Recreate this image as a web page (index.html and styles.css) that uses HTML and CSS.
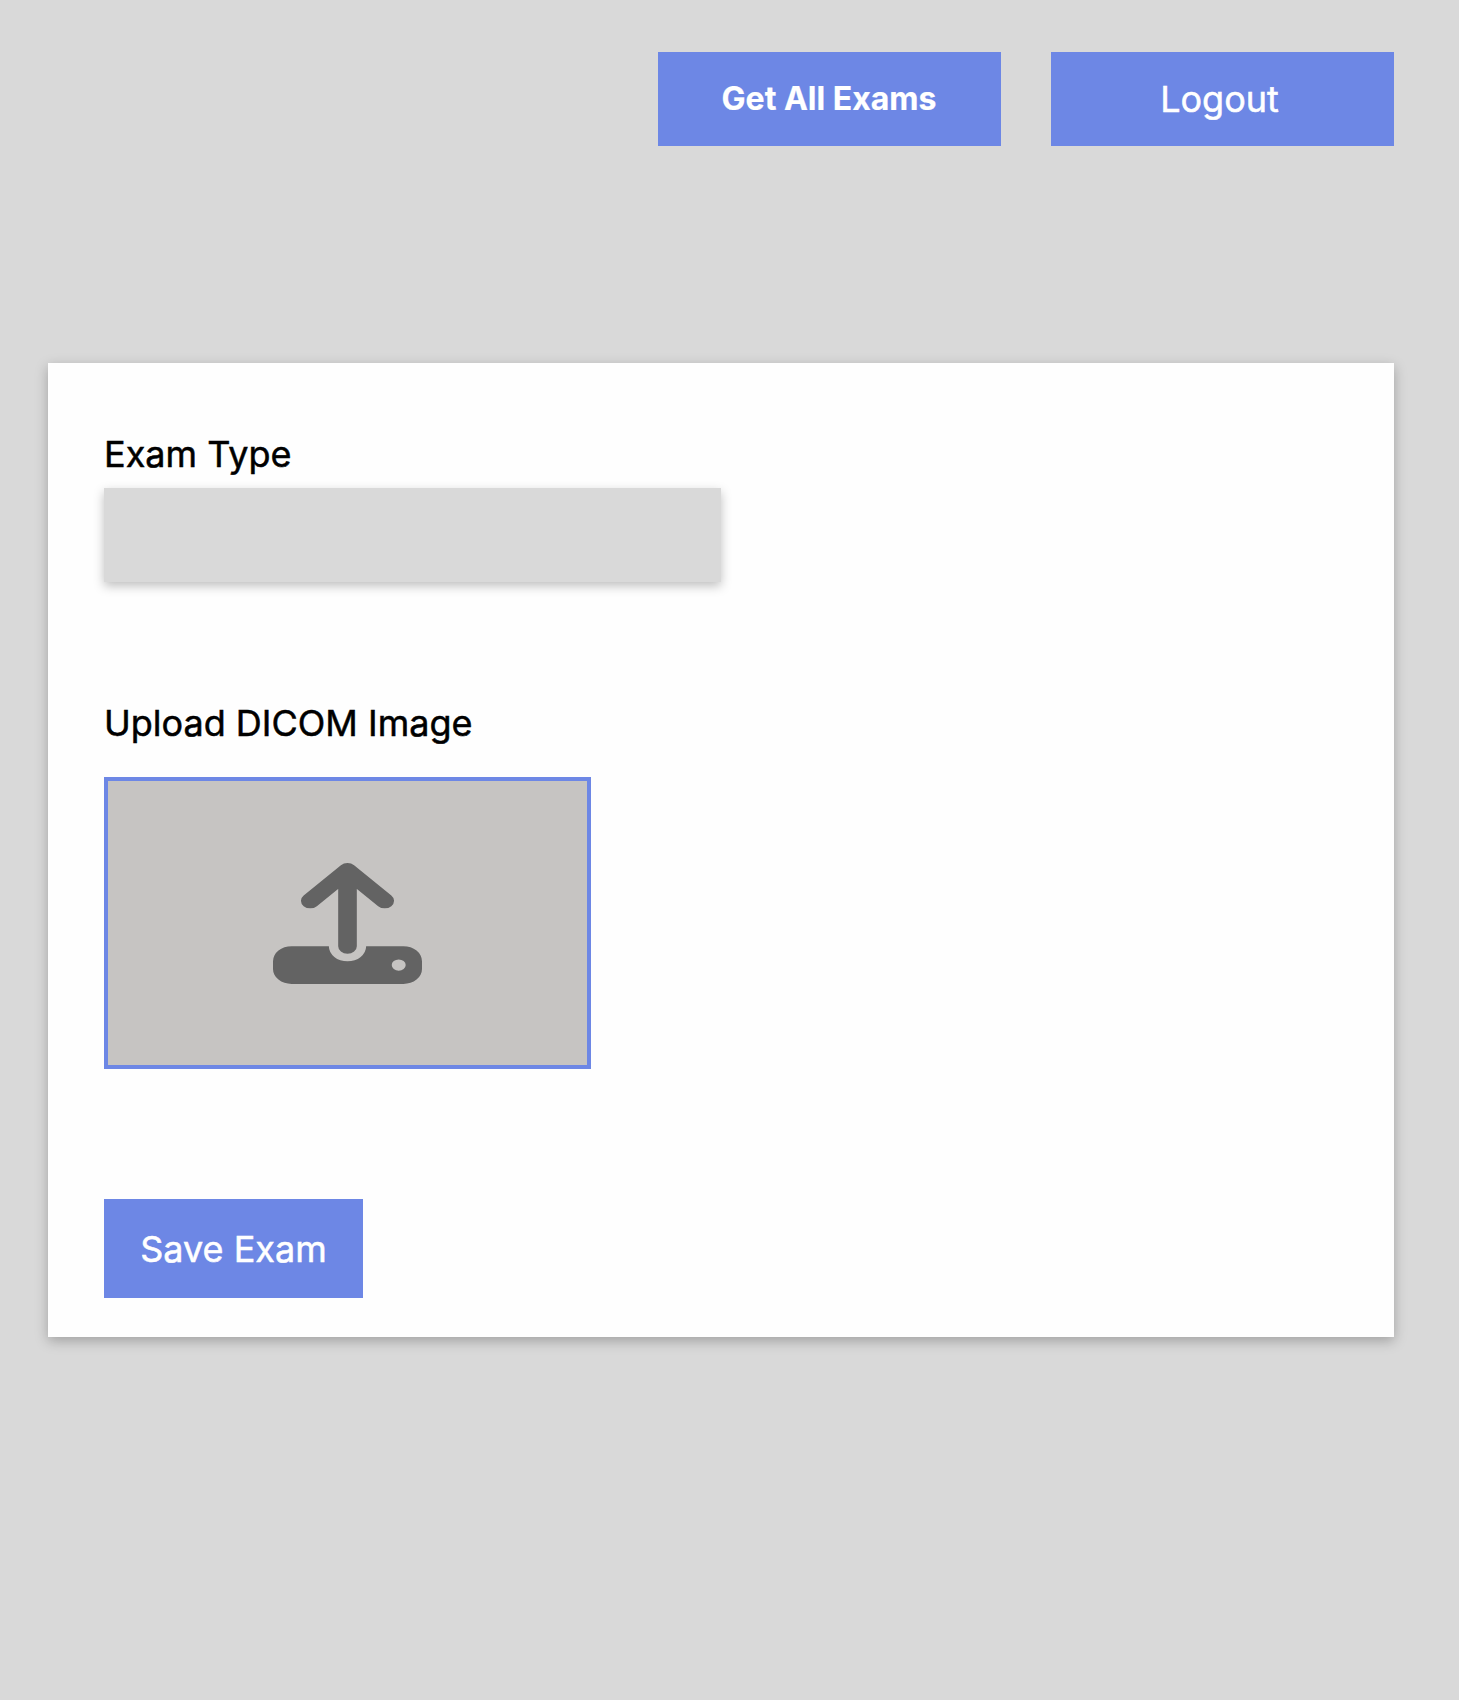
FILE: index.html
```html
<!DOCTYPE html>
<html lang="en">
<head>
<meta charset="utf-8">
<title>New Exam</title>
<link rel="stylesheet" href="styles.css">
</head>
<body>
<header class="toolbar">
  <button class="button button-strong" type="button"><span class="label-strong">Get All Exams</span></button>
  <button class="button" type="button"><span class="label-logout">Logout</span></button>
</header>
<main>
  <form class="card">
    <label class="label" for="exam-type">Exam Type</label>
    <input class="field" id="exam-type" type="text">
    <span class="label label-upload">Upload DICOM Image</span>
    <button class="dropzone" type="button" aria-label="Upload image">
      <svg class="upload-icon" viewBox="0 0 16 16" preserveAspectRatio="none" aria-hidden="true">
        <path d="M2 11H6A2 2 0 0 0 10 11H14A2 2 0 0 1 16 13V14A2 2 0 0 1 14 16H2A2 2 0 0 1 0 14V13A2 2 0 0 1 2 11ZM13.5 12.75A.75.75 0 0 0 13.5 14.25A.75.75 0 0 0 13.5 12.75Z" fill="#636363" fill-rule="evenodd"/>
        <path d="M4 5L8 1L12 5M8 1V11" fill="none" stroke="#636363" stroke-width="2" stroke-linecap="round" stroke-linejoin="round"/>
      </svg>
    </button>
    <button class="button button-save" type="button"><span class="label-save">Save Exam</span></button>
  </form>
</main>
</body>
</html>
```
FILE: styles.css
```css
* {
  box-sizing: border-box;
}

body {
  margin: 0;
  min-height: 1700px;
  padding: 52px 65px 0 48px;
  background: #d9d9d9;
  font-family: Inter, sans-serif;
}

.toolbar {
  display: flex;
  justify-content: flex-end;
  gap: 50px;
  margin-bottom: 217px;
}

.button {
  display: flex;
  align-items: center;
  justify-content: center;
  width: 343px;
  height: 94px;
  padding: 0;
  border: 0;
  background: #6d87e5;
  color: #fff;
  font: 400 36px/44px Inter, sans-serif;
  white-space: nowrap;
  -webkit-text-stroke: 0.5px currentColor;
}

.button-strong {
  padding-bottom: 1px;
  font-size: 32px;
  line-height: 39px;
  font-weight: 700;
  -webkit-text-stroke-width: 0.2px;
}

.label-strong {
  padding-right: 1px;
}

.label-logout {
  padding-right: 6px;
}

.card {
  display: flex;
  flex-direction: column;
  align-items: flex-start;
  height: 974px;
  padding: 69px 56px 0;
  background: #fefefe;
  box-shadow: 0 4px 12px rgba(0, 0, 0, 0.26);
}

.label {
  color: #000;
  font-size: 36px;
  line-height: 44px;
  -webkit-text-stroke: 0.5px currentColor;
}

.field {
  width: 617px;
  height: 94px;
  margin: 12px 0 119px;
  padding: 0 20px;
  border: 0;
  background: #d9d9d9;
  box-shadow: 0 4px 10px rgba(0, 0, 0, 0.25);
  font: 400 36px/44px Inter, sans-serif;
}

.dropzone {
  display: flex;
  align-items: center;
  justify-content: center;
  width: 487px;
  height: 292px;
  margin: 32px 0 130px;
  padding: 0;
  border: 4px solid #6d87e5;
  background: #c6c4c2;
}

.upload-icon {
  display: block;
  width: 149px;
  height: 121px;
}

.button-save {
  width: 259px;
  height: 99px;
}
```
